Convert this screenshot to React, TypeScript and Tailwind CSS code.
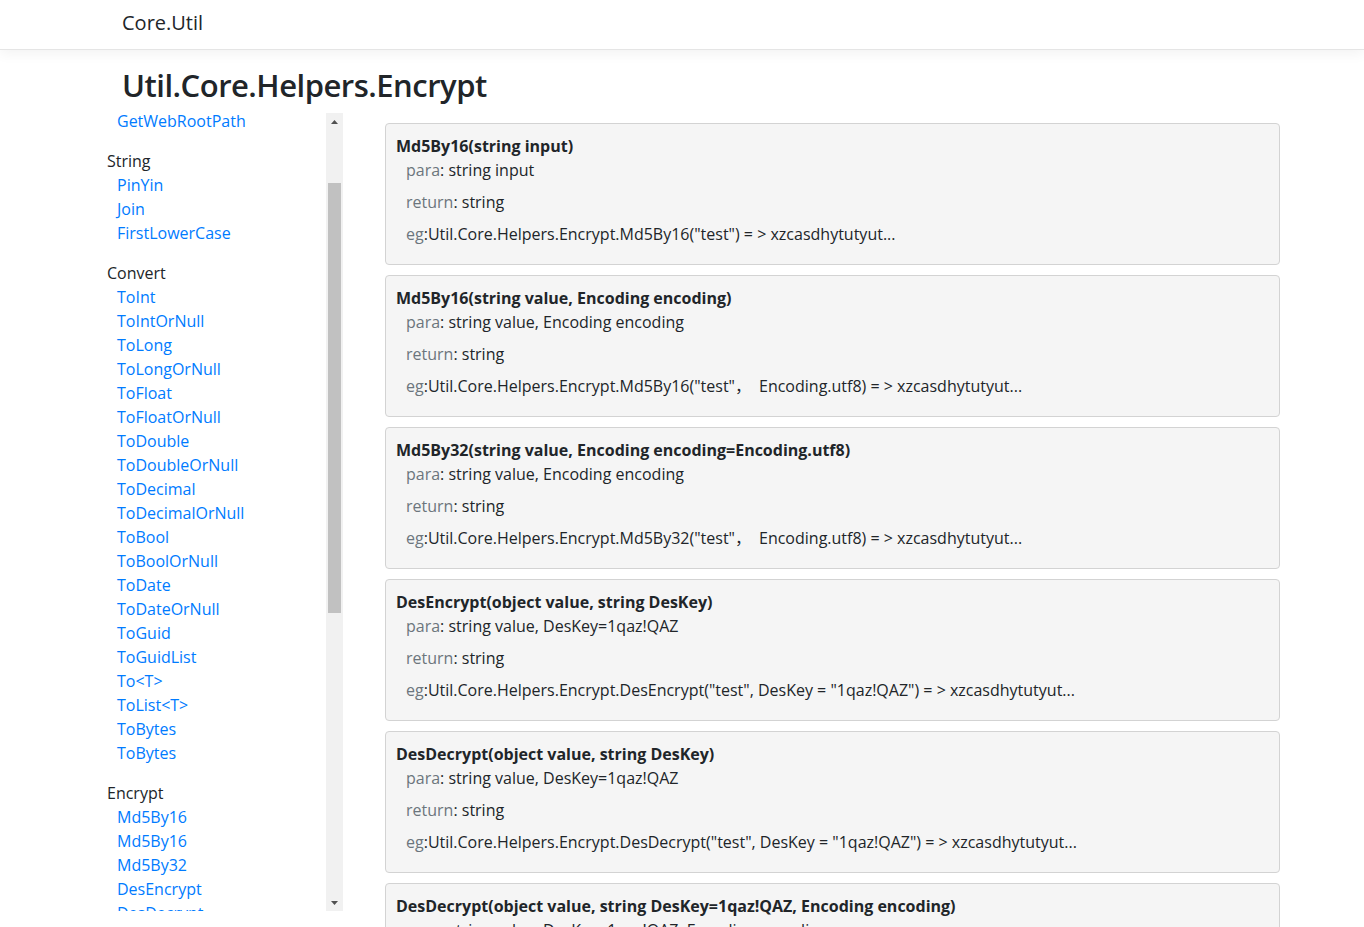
import { useEffect, useRef } from 'react';

// Sidebar index of helper classes and their methods.
const groups = [
  { name: 'Web', items: ['GetClientIp', 'GetHost', 'GetRootPath', 'GetWebRootPath'] },
  { name: 'String', items: ['PinYin', 'Join', 'FirstLowerCase'] },
  {
    name: 'Convert',
    items: [
      'ToInt', 'ToIntOrNull', 'ToLong', 'ToLongOrNull', 'ToFloat', 'ToFloatOrNull', 'ToDouble',
      'ToDoubleOrNull', 'ToDecimal', 'ToDecimalOrNull', 'ToBool', 'ToBoolOrNull', 'ToDate',
      'ToDateOrNull', 'ToGuid', 'ToGuidList', 'To<T>', 'ToList<T>', 'ToBytes', 'ToBytes',
    ],
  },
  {
    name: 'Encrypt',
    items: [
      'Md5By16', 'Md5By16', 'Md5By32', 'DesEncrypt', 'DesDecrypt', 'DesEncrypt', 'DesDecrypt',
      'HmacSha256', 'AesEncrypt', 'AesDecrypt',
    ],
  },
  { name: 'Json', items: ['ToJson', 'ToObject', 'ToObject<T>'] },
];

const methods = [
  {
    sig: 'Md5By16(string input)',
    para: 'string input',
    ret: 'string',
    eg: 'Util.Core.Helpers.Encrypt.Md5By16("test") = > xzcasdhytutyut...',
  },
  {
    sig: 'Md5By16(string value, Encoding encoding)',
    para: 'string value, Encoding encoding',
    ret: 'string',
    eg: 'Util.Core.Helpers.Encrypt.Md5By16("test"，\u3000Encoding.utf8) = > xzcasdhytutyut...',
  },
  {
    sig: 'Md5By32(string value, Encoding encoding=Encoding.utf8)',
    para: 'string value, Encoding encoding',
    ret: 'string',
    eg: 'Util.Core.Helpers.Encrypt.Md5By32("test"，\u3000Encoding.utf8) = > xzcasdhytutyut...',
  },
  {
    sig: 'DesEncrypt(object value, string DesKey)',
    para: 'string value, DesKey=1qaz!QAZ',
    ret: 'string',
    eg: 'Util.Core.Helpers.Encrypt.DesEncrypt("test", DesKey = "1qaz!QAZ") = > xzcasdhytutyut...',
  },
  {
    sig: 'DesDecrypt(object value, string DesKey)',
    para: 'string value, DesKey=1qaz!QAZ',
    ret: 'string',
    eg: 'Util.Core.Helpers.Encrypt.DesDecrypt("test", DesKey = "1qaz!QAZ") = > xzcasdhytutyut...',
  },
  {
    sig: 'DesDecrypt(object value, string DesKey=1qaz!QAZ, Encoding encoding)',
    para: 'string value, DesKey=1qaz!QAZ, Encoding encoding',
    ret: 'string',
    eg: 'Util.Core.Helpers.Encrypt.DesDecrypt("test", DesKey = "1qaz!QAZ", Encoding.utf8) = > xzcasdhytutyut...',
  },
  {
    sig: 'DesEncrypt(object value, string DesKey=1qaz!QAZ, Encoding encoding)',
    para: 'string value, DesKey=1qaz!QAZ, Encoding encoding',
    ret: 'string',
    eg: 'Util.Core.Helpers.Encrypt.DesEncrypt("test", DesKey = "1qaz!QAZ", Encoding.utf8) = > xzcasdhytutyut...',
  },
];

function Line({ label, children }: { label: string; children: string }) {
  return (
    <p className="mb-2 pl-[10px]">
      <span className="text-[#6c757d]">{label}</span>:{children}
    </p>
  );
}

function Sidebar() {
  const listRef = useRef<HTMLDivElement>(null);

  // the index is shown scrolled a little, with the first group out of view
  useEffect(() => {
    if (listRef.current) listRef.current.scrollTop = 100;
  }, []);

  return (
    <aside className="flex h-[798px] w-[236px] shrink-0">
      <div ref={listRef} className="flex-1 overflow-hidden">
        {groups.map((g, gi) => (
          <div key={g.name} className={gi === 0 ? '' : 'mt-4'}>
            <div className="text-[#212529]">{g.name}</div>
            <ul>
              {g.items.map((item, i) => (
                <li key={i} className="pl-[10px]">
                  <a href="#" className="text-[#007bff] hover:underline">{item}</a>
                </li>
              ))}
            </ul>
          </div>
        ))}
      </div>

      {/* scrollbar */}
      <div className="flex w-[17px] flex-col bg-[#f1f1f1]">
        <div className="flex h-[17px] items-center justify-center">
          <svg width="7" height="4" viewBox="0 0 7 4"><path d="M3.5 0L7 4H0z" fill="#505050" /></svg>
        </div>
        <div className="flex-1 pt-[53px]">
          <div className="mx-[2px] h-[430px] bg-[#c1c1c1]" />
        </div>
        <div className="flex h-[17px] items-center justify-center">
          <svg width="7" height="4" viewBox="0 0 7 4"><path d="M0 0H7L3.5 4z" fill="#505050" /></svg>
        </div>
      </div>
    </aside>
  );
}

export default function App() {
  return (
    <div className="min-h-screen bg-white text-[16px] leading-6 text-[#212529]" style={{ fontFamily: '"Open Sans", "Noto Sans CJK SC", sans-serif' }}>
      <header className="h-[50px] border-b border-[#e5e5e5] bg-white pl-[122px] pt-[8px] shadow-[0_4px_12px_rgba(0,0,0,0.05)]">
        <a href="#" className="text-[20px] leading-[30px] text-[#212529]">Core.Util</a>
      </header>

      <h1 className="mt-[13px] mb-[6px] pl-[122px] text-[31px] font-semibold leading-[44px] tracking-[-0.5px] text-[#212529]">
        Util.Core.Helpers.Encrypt
      </h1>

      <div className="flex pl-[107px]">
        <Sidebar />

        <main className="ml-[42px] w-[895px] shrink-0 pt-[10px]">
          {methods.map((m, i) => (
            <div key={i} className="mb-[10px] rounded border border-[#d3d3d3] bg-[#f5f5f5] p-[10px]">
              <h5 className="font-bold text-[#212529]">{m.sig}</h5>
              <Line label="para">{' ' + m.para}</Line>
              <Line label="return">{' ' + m.ret}</Line>
              <Line label="eg">{m.eg}</Line>
            </div>
          ))}
        </main>
      </div>
    </div>
  );
}
